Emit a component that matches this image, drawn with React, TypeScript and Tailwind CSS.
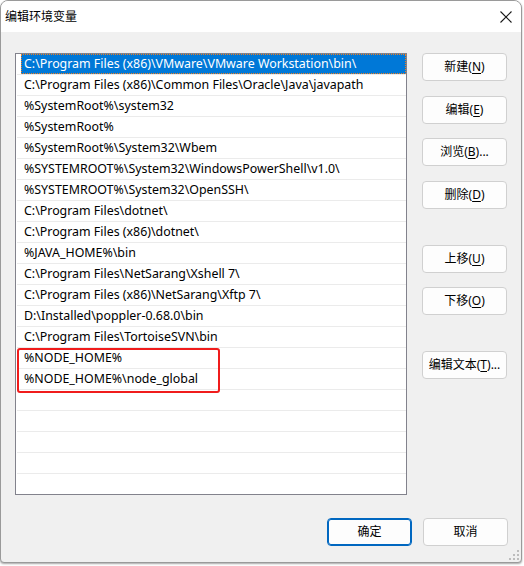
import React from "react";

const FONT = {
  fontFamily:
    '"Noto Sans", "Noto Sans CJK SC", "Liberation Sans", sans-serif',
};

const paths = [
  "C:\\Program Files (x86)\\VMware\\VMware Workstation\\bin\\",
  "C:\\Program Files (x86)\\Common Files\\Oracle\\Java\\javapath",
  "%SystemRoot%\\system32",
  "%SystemRoot%",
  "%SystemRoot%\\System32\\Wbem",
  "%SYSTEMROOT%\\System32\\WindowsPowerShell\\v1.0\\",
  "%SYSTEMROOT%\\System32\\OpenSSH\\",
  "C:\\Program Files\\dotnet\\",
  "C:\\Program Files (x86)\\dotnet\\",
  "%JAVA_HOME%\\bin",
  "C:\\Program Files\\NetSarang\\Xshell 7\\",
  "C:\\Program Files (x86)\\NetSarang\\Xftp 7\\",
  "D:\\Installed\\poppler-0.68.0\\bin",
  "C:\\Program Files\\TortoiseSVN\\bin",
  "%NODE_HOME%",
  "%NODE_HOME%\\node_global",
  "",
  "",
  "",
  "",
  "",
];

function Btn({
  label,
  accel,
  suffix = "",
  primary = false,
  className = "",
}: {
  label: string;
  accel?: string;
  suffix?: string;
  primary?: boolean;
  className?: string;
}) {
  return (
    <div
      className={
        "flex h-[28px] w-[85px] items-center justify-center rounded-[4px] bg-[#fdfdfd] text-[12px] text-black " +
        (primary
          ? "border border-[#0067c0] shadow-[inset_0_0_0_1px_#0067c0]"
          : "border border-[#d0d0d0]") +
        " " +
        className
      }
    >
      <span>
        {label}
        {accel !== undefined && (
          <>
            (<span className="underline underline-offset-2">{accel}</span>)
          </>
        )}
        {suffix}
      </span>
    </div>
  );
}

export default function App() {
  return (
    <div className="h-[566px] w-[524px] bg-white" style={FONT}>
      <div className="flex h-[563px] w-[522px] flex-col overflow-hidden rounded-t-[8px] rounded-b-[4px] border border-[#9a9a9a] bg-[#f0f0f0] shadow-[0_1px_2px_rgba(0,0,0,0.35)]">
        {/* title bar */}
        <div className="flex h-[31px] shrink-0 items-center justify-between bg-white pl-[4px] pr-[9px]">
          <span className="text-[12px] text-black">编辑环境变量</span>
          <svg width="12" height="12" viewBox="0 0 12 12">
            <path d="M0.5 0.5 L11.5 11.5 M11.5 0.5 L0.5 11.5" stroke="#1a1a1a" strokeWidth="1.1" />
          </svg>
        </div>

        {/* content */}
        <div className="relative flex flex-1 flex-col">
          <div className="flex pl-[14px] pt-[21px]">
            {/* path list */}
            <div className="relative h-[442px] w-[392px] overflow-hidden border border-[#82828c] bg-white pl-[1px]">
              {paths.map((p, i) => (
                <div key={i} className="h-[21px] border-b border-[#ebebeb]">
                  {i === 0 ? (
                    <div className="ml-[4px] flex h-[20px] items-center border border-dotted border-[#f08020] bg-[#0078d7] pl-[2px] text-[12.4px] text-white">
                      {p}
                    </div>
                  ) : (
                    <div className="flex h-[20px] items-center pl-[7px] text-[12.4px] text-black">
                      {p}
                    </div>
                  )}
                </div>
              ))}
              <div className="absolute left-[1px] top-[294px] h-[45px] w-[203px] rounded-[3px] border-2 border-[#f01c1c]" />
            </div>

            {/* action buttons */}
            <div className="ml-[15px] flex flex-col">
              <Btn label="新建" accel="N" />
              <Btn label="编辑" accel="E" className="mt-[15px]" />
              <Btn label="浏览" accel="B" suffix="..." className="mt-[14px]" />
              <Btn label="删除" accel="D" className="mt-[15px]" />
              <Btn label="上移" accel="U" className="mt-[36px]" />
              <Btn label="下移" accel="O" className="mt-[14px]" />
              <Btn label="编辑文本" accel="T" suffix="..." className="mt-[36px]" />
            </div>
          </div>

          {/* dialog buttons */}
          <div className="mt-[23px] flex justify-end gap-[11px] pr-[13px]">
            <Btn label="确定" primary />
            <Btn label="取消" />
          </div>

          {/* size grip */}
          <svg
            width="10"
            height="10"
            viewBox="0 0 10 10"
            className="absolute bottom-[2px] right-[2px]"
          >
            <rect x="8" y="0" width="2" height="2" fill="#bdbdbd" />
            <rect x="4" y="4" width="2" height="2" fill="#bdbdbd" />
            <rect x="8" y="4" width="2" height="2" fill="#bdbdbd" />
            <rect x="0" y="8" width="2" height="2" fill="#bdbdbd" />
            <rect x="4" y="8" width="2" height="2" fill="#bdbdbd" />
            <rect x="8" y="8" width="2" height="2" fill="#bdbdbd" />
          </svg>
        </div>
      </div>
    </div>
  );
}
